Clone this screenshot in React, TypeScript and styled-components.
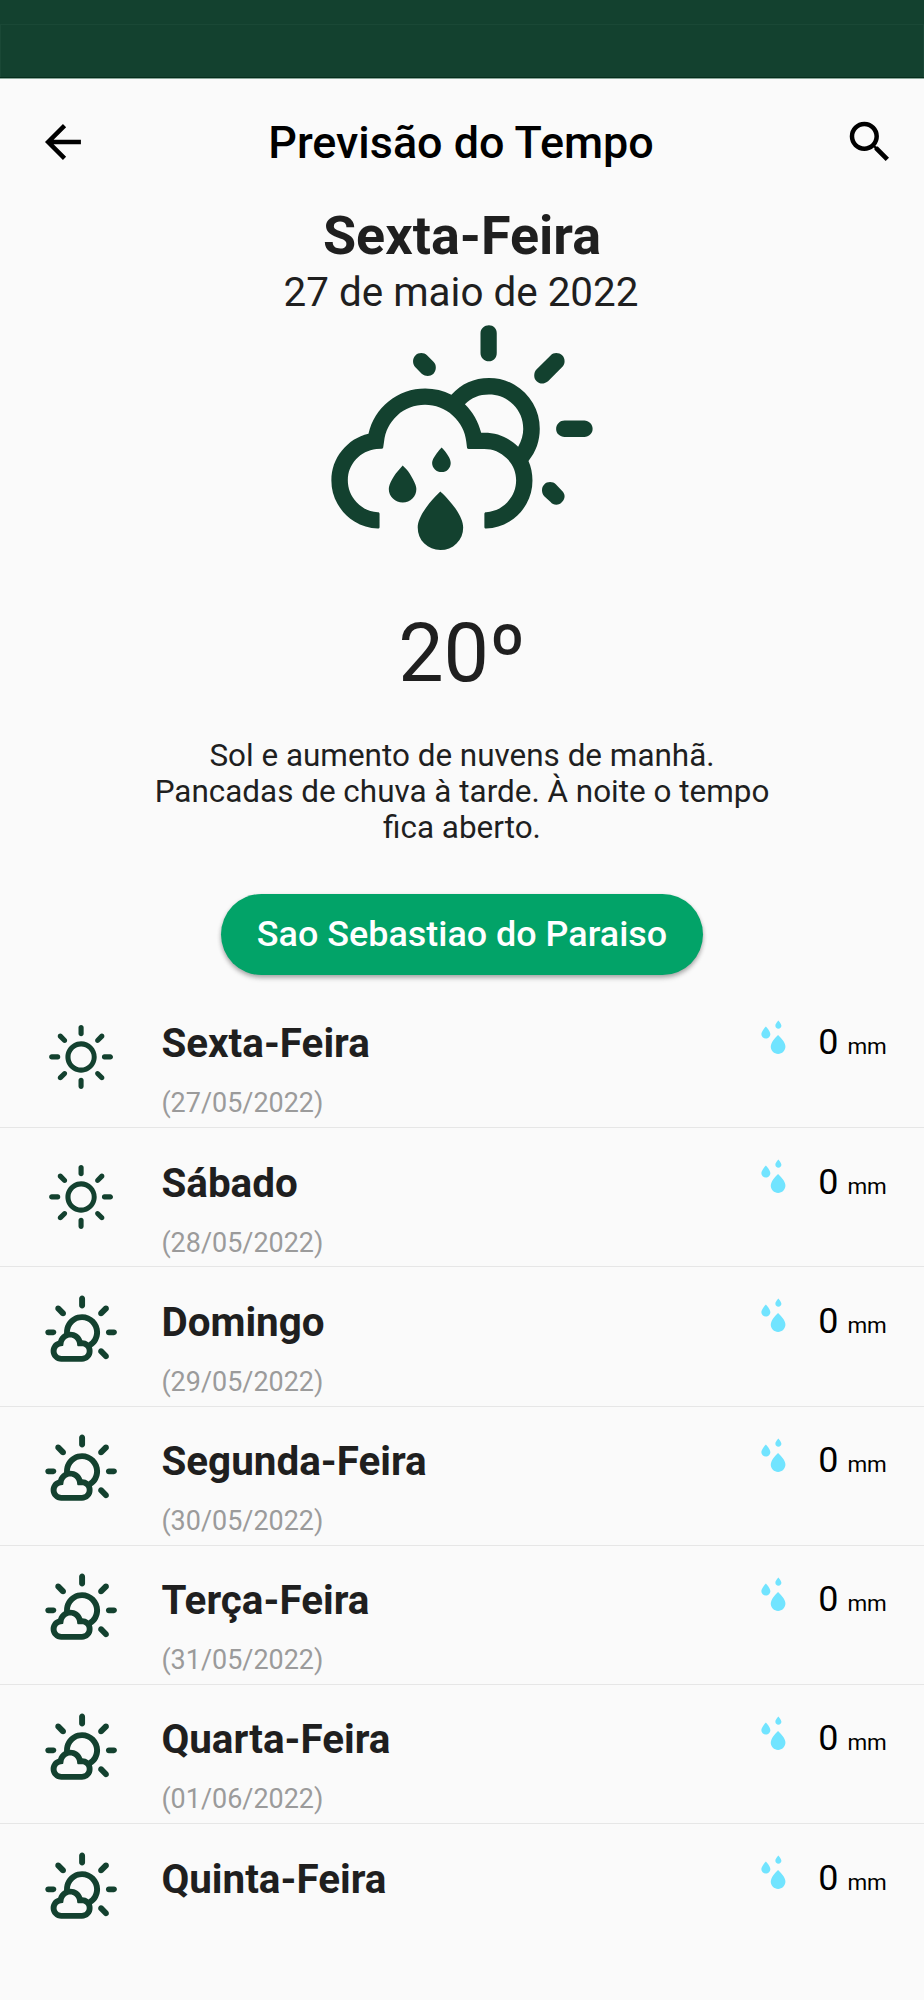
import React from 'react';
import styled, { createGlobalStyle } from 'styled-components';
import { WiDaySprinkle, WiDaySunny, WiDaySunnyOvercast, WiRaindrops } from 'react-icons/wi';
import { MdArrowBack, MdSearch } from 'react-icons/md';

const GlobalStyle = createGlobalStyle`
  *, *::before, *::after { box-sizing: border-box; }
  body {
    margin: 0;
    background: #fafafa;
    color: #1f1f1f;
    font-family: Roboto, sans-serif;
  }
`;

const Screen = styled.div`
  display: flex;
  flex-direction: column;
  width: 924px;
  height: 2000px;
  overflow: hidden;
  background: #fafafa;
`;

const StatusBar = styled.div`
  flex: none;
  height: 78px;
  padding-top: 24px;
  background: #13412f;
  border-bottom: 1px solid #062d1c;
  box-shadow: 0 1px 0 #8aa89b;
`;

const StatusInner = styled.div`
  height: 100%;
  border: 1px solid #1a4836;
  border-bottom: 0;
`;

const AppBar = styled.header`
  flex: none;
  display: grid;
  grid-template-columns: 54px 1fr 54px;
  align-items: center;
  height: 125px;
  padding: 2px 27px 0 36px;
  color: #000;
`;

const IconButton = styled.button`
  display: flex;
  padding: 0;
  border: 0;
  background: none;
  color: inherit;

  svg {
    flex: none;
    width: 53.9px;
    height: 53.9px;
  }
`;

const Title = styled.h1`
  margin: 0;
  padding: 1px 11px 0 0;
  font-size: 44.9px;
  line-height: 53px;
  font-weight: 500;
  text-align: center;
  white-space: nowrap;
`;

const Today = styled.section`
  flex: none;
  display: flex;
  flex-direction: column;
  align-items: center;
  padding-top: 0.6px;
  text-align: center;
`;

const Weekday = styled.h2`
  margin: 0;
  font-size: 53.9px;
  line-height: 63px;
  font-weight: 700;
`;

const FullDate = styled.p`
  margin: 2px 0 0;
  padding-right: 2px;
  font-size: 40.4px;
  line-height: 47px;
`;

const MainIcon = styled(WiDaySprinkle)`
  flex: none;
  width: 292px;
  height: 292px;
  color: #13412f;
`;

const Temperature = styled.p`
  margin: 0;
  font-size: 80.85px;
  line-height: 92px;
`;

const Summary = styled.p`
  width: 640px;
  margin: 38.4px 0 0;
  font-size: 31.44px;
  line-height: 36px;
`;

const CityButton = styled.button`
  height: 81px;
  margin-top: 48px;
  padding: 0 36.2px;
  border: 0;
  border-radius: 41px;
  background: #02a368;
  box-shadow: 0 2px 4px rgba(0, 0, 0, 0.26), 0 4px 5px rgba(0, 0, 0, 0.12);
  color: #fff;
  font-family: inherit;
  font-size: 35.93px;
  line-height: 81px;
  font-weight: 500;
`;

const List = styled.ul`
  flex: none;
  margin: 13.9px 0 0;
  padding: 0;
  list-style: none;
`;

const Row = styled.li`
  display: flex;
  height: 139.24px;
  padding: 0 37.2px 0 35.9px;
  border-bottom: 1px solid #e6e6e6;

  &:last-child {
    border-bottom: 0;
  }
`;

const RowIcon = styled.div`
  flex: none;
  width: 125.5px;
  padding-top: 24.5px;
  color: #13412f;

  svg {
    display: block;
    width: 90.2px;
    height: 90.2px;
  }
`;

const Day = styled.div`
  flex: 1;
  padding-top: 31.4px;
`;

const DayName = styled.h3`
  margin: 0;
  font-size: 40.4px;
  line-height: 47px;
  font-weight: 700;
`;

const DayDate = styled.p`
  margin: 20px 0 0;
  color: #9b9b9b;
  font-size: 26.95px;
  line-height: 32px;
`;

const Rain = styled.div`
  flex: none;
  display: flex;
  align-items: flex-start;
  color: #000;

  svg {
    width: 90.8px;
    height: 90.8px;
    margin-top: 8px;
    color: #71e4ff;
  }
`;

const Amount = styled.p`
  margin: 32.4px 0 0;
  font-size: 35.93px;
  line-height: 42px;
  white-space: nowrap;
`;

const Unit = styled.span`
  font-size: 22.46px;
`;

interface Forecast {
  name: string;
  date: string;
  sunny?: boolean;
}

const forecast: Forecast[] = [
  { name: 'Sexta-Feira', date: '(27/05/2022)', sunny: true },
  { name: 'Sábado', date: '(28/05/2022)', sunny: true },
  { name: 'Domingo', date: '(29/05/2022)' },
  { name: 'Segunda-Feira', date: '(30/05/2022)' },
  { name: 'Terça-Feira', date: '(31/05/2022)' },
  { name: 'Quarta-Feira', date: '(01/06/2022)' },
  { name: 'Quinta-Feira', date: '' },
];

export default function App() {
  return (
    <>
      <GlobalStyle />
      <Screen>
        <StatusBar>
          <StatusInner />
        </StatusBar>
        <AppBar>
          <IconButton aria-label="Voltar"><MdArrowBack /></IconButton>
          <Title>Previsão do Tempo</Title>
          <IconButton aria-label="Buscar"><MdSearch /></IconButton>
        </AppBar>
        <Today>
          <Weekday>Sexta-Feira</Weekday>
          <FullDate>27 de maio de 2022</FullDate>
          <MainIcon />
          <Temperature>20º</Temperature>
          <Summary>
            Sol e aumento de nuvens de manhã. Pancadas de chuva à tarde. À noite o tempo fica aberto.
          </Summary>
          <CityButton>Sao Sebastiao do Paraiso</CityButton>
        </Today>
        <List>
          {forecast.map((day) => (
            <Row key={day.name}>
              <RowIcon>{day.sunny ? <WiDaySunny /> : <WiDaySunnyOvercast />}</RowIcon>
              <Day>
                <DayName>{day.name}</DayName>
                <DayDate>{day.date}</DayDate>
              </Day>
              <Rain>
                <WiRaindrops />
                <Amount>0 <Unit>mm</Unit></Amount>
              </Rain>
            </Row>
          ))}
        </List>
      </Screen>
    </>
  );
}
